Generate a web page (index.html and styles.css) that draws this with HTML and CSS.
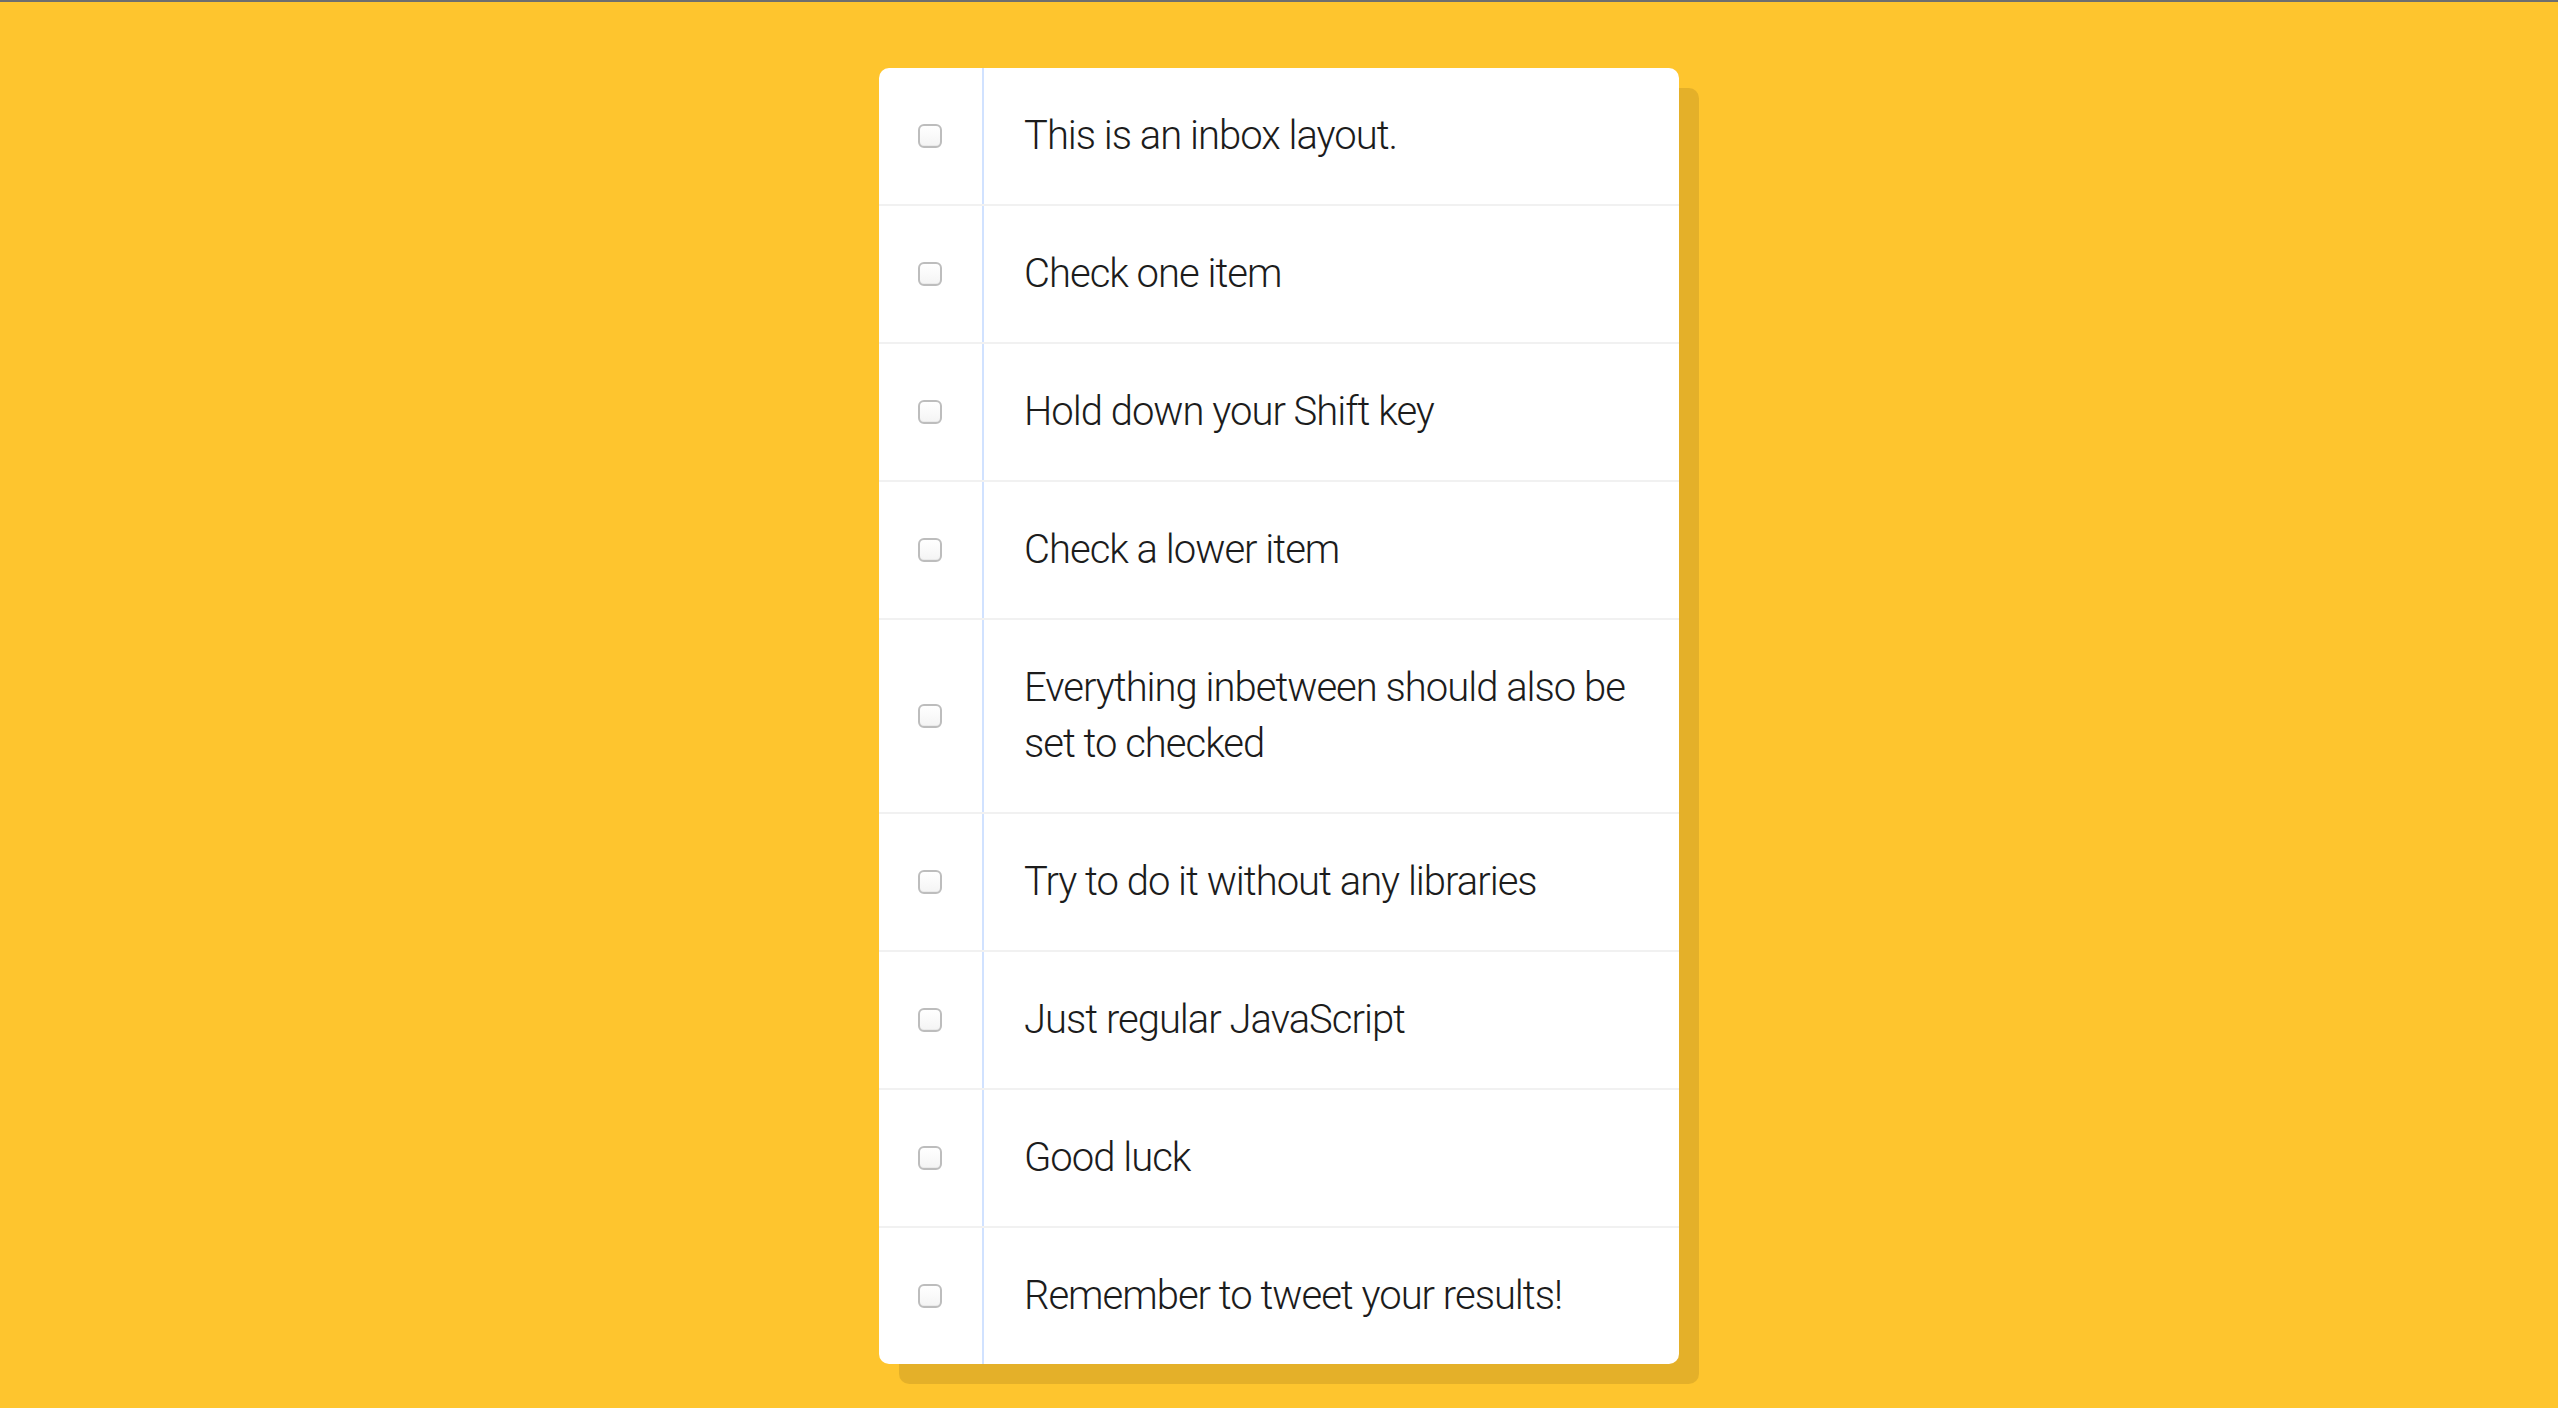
FILE: index.html
```html
<!DOCTYPE html>
<html lang="en">
<head>
<meta charset="utf-8">
<title>Hold Shift to Check Checkboxes</title>
<link rel="stylesheet" href="styles.css">
</head>
<body>
<div class="topline"></div>
<div class="inbox">
  <div class="item"><input type="checkbox"><p>This is an inbox layout.</p></div>
  <div class="item"><input type="checkbox"><p>Check one item</p></div>
  <div class="item"><input type="checkbox"><p>Hold down your Shift key</p></div>
  <div class="item"><input type="checkbox"><p>Check a lower item</p></div>
  <div class="item"><input type="checkbox"><p>Everything inbetween should also be set to checked</p></div>
  <div class="item"><input type="checkbox"><p>Try to do it without any libraries</p></div>
  <div class="item"><input type="checkbox"><p>Just regular JavaScript</p></div>
  <div class="item"><input type="checkbox"><p>Good luck</p></div>
  <div class="item"><input type="checkbox"><p>Remember to tweet your results!</p></div>
</div>
</body>
</html>
```
FILE: styles.css
```css
html {
  background: #fec52e;
}
body {
  margin: 0;
  min-height: 1408px;
  font-family: Roboto, "Liberation Sans", sans-serif;
}
.topline {
  height: 2px;
  background: #6e6e6e;
}
.inbox {
  width: 800px;
  margin: 66px auto 0;
  background: #ffffff;
  border-radius: 10px;
  box-shadow: 20px 20px 0 rgba(0, 0, 0, 0.1);
}
.item {
  display: flex;
  align-items: center;
  border-bottom: 2px solid #f1f1f1;
}
.item:last-child {
  border-bottom: 0;
}
.item input[type="checkbox"] {
  appearance: none;
  -webkit-appearance: none;
  box-sizing: border-box;
  width: 24px;
  height: 24px;
  margin: 0 40px 0 39px;
  flex: none;
  border: 2px solid #bdbdbd;
  border-radius: 6px;
  background: linear-gradient(#ffffff, #f4f4f4);
  box-shadow: inset 0 -1px 0 rgba(0,0,0,0.04);
}
.item p {
  margin: 0;
  padding: 40px 30px 40px 40px;
  flex: 1;
  font-family: Roboto, "Liberation Sans", sans-serif;
  font-size: 40px;
  font-weight: 300;
  letter-spacing: -1px;
  line-height: 56px;
  color: #1c1c1c;
  border-left: 2px solid #d1e2ff;
}
```
